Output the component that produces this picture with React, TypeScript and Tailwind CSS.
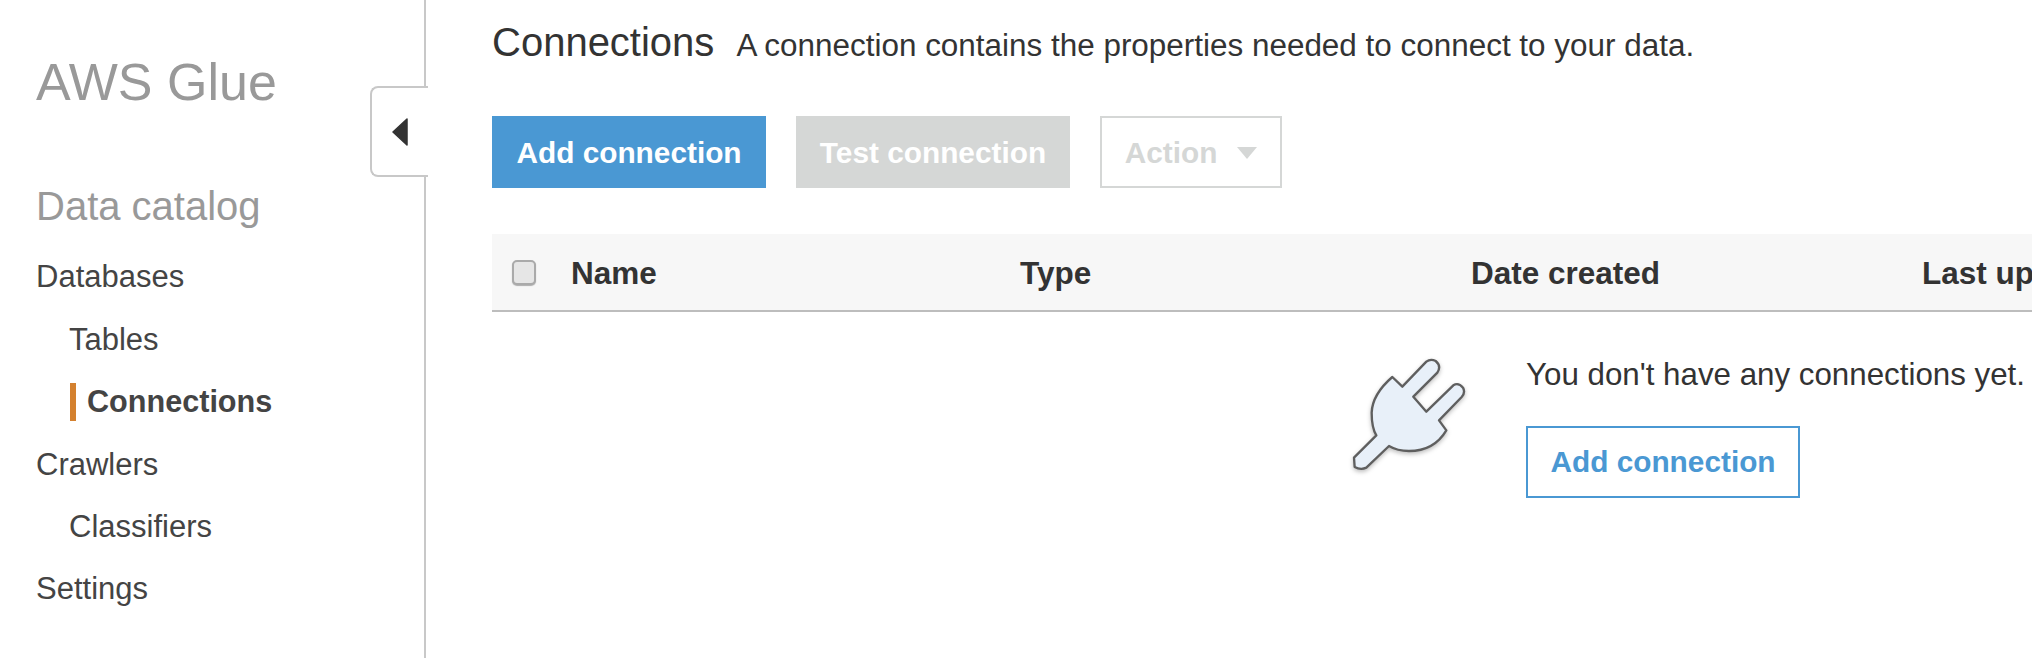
const sans = "font-['Liberation_Sans',Arial,sans-serif]";

function NavItem({ label, sub, active }: { label: string; sub?: boolean; active?: boolean }) {
  return (
    <div className={`h-[62.4px] flex items-center text-[31px] pt-[1px] text-[#444] ${sub ? "pl-[33px]" : ""}`}>
      {active ? (
        <span className="h-[38px] ml-[1px] border-l-[6px] border-[#d4812f] pl-[11px] font-bold text-[30.6px] leading-[36px]">{label}</span>
      ) : (
        label
      )}
    </div>
  );
}

function Plug() {
  return (
    <svg viewBox="0 0 600 450" className="w-[200px] h-[150px] drop-shadow-[0_2px_2px_rgba(0,0,0,0.25)]">
      <path
        d="M220 108 L250 137 L322 62 Q335 52 350 60 Q368 75 355 95 L283 167 L322 212 L403 133 Q418 123 432 140 Q440 155 428 168 L360 238 L382 268 Q345 330 270 330 Q235 330 210 315 L142 380 Q125 388 107 378 L105 350 L172 283 Q158 260 158 215 Q160 160 220 108 Z"
        fill="#e8f0f9"
        stroke="#5f5f5f"
        strokeWidth="7"
        strokeLinejoin="round"
      />
    </svg>
  );
}

export default function App() {
  return (
    <div className={`${sans} flex w-[2032px] h-[658px] overflow-hidden bg-white`}>
      <aside className="relative w-[426px] shrink-0 border-r-2 border-[#c8c8c8] pl-[36px]">
        <h1 className="pt-[52px] h-[160px] text-[52px] leading-[60px] text-[#999]">AWS Glue</h1>
        <h2 className="pt-[24px] h-[86px] text-[40px] leading-[44px] text-[#999]">Data catalog</h2>
        <NavItem label="Databases" />
        <NavItem label="Tables" sub />
        <NavItem label="Connections" sub active />
        <NavItem label="Crawlers" />
        <NavItem label="Classifiers" sub />
        <NavItem label="Settings" />
        <div className="absolute left-[370px] top-[86px] w-[58px] h-[91px] bg-white border-2 border-r-0 border-[#c8c8c8] rounded-l-[8px] flex items-center justify-center">
          <svg viewBox="0 0 16 28" className="w-[16px] h-[28px] ml-[0px]">
            <path d="M15 1 V27 L1 14 Z" fill="#333" stroke="#333" strokeWidth="1.5" strokeLinejoin="round" />
          </svg>
        </div>
      </aside>
      <main className="flex-1 min-w-0 pl-[66px]">
        <div className="h-[116px] pt-[20px] flex items-baseline text-[#333]">
          <span className="text-[40px] leading-[44px]">Connections</span>
          <span className="ml-[22px] text-[31.45px]">A connection contains the properties needed to connect to your data.</span>
        </div>
        <div className="flex gap-[30px] h-[72px] text-[29.8px] font-bold">
          <button className="w-[274px] pt-[2px] bg-[#4a98d3] text-white">Add connection</button>
          <button className="w-[274px] pt-[2px] bg-[#d5d7d6] text-white">Test connection</button>
          <button className="w-[182px] pt-[2px] border-2 border-[#d5d7d6] text-[#d5d7d6] flex items-center justify-center gap-[21px]">
            Action
            <svg viewBox="0 0 20 12" className="w-[20px] h-[12px] -ml-[1px]"><path d="M0 0 H20 L10 12 Z" fill="#d5d7d6" /></svg>
          </button>
        </div>
        <div className="mt-[46px] h-[78px] w-[1800px] bg-[#f7f7f7] border-b-2 border-[#bdbdbd] flex items-center text-[31.5px] font-bold text-[#333]">
          <span className="ml-[20px] shrink-0 w-[24px] h-[25px] rounded-[5px] border-2 border-[#aaa] bg-[#e6e6e6] shadow-[0_1px_1px_rgba(0,0,0,0.3)]" />
          <div className="ml-[35px] pt-[3px] grid grid-cols-[449px_451px_451px_400px]">
            <span>Name</span>
            <span>Type</span>
            <span>Date created</span>
            <span className="whitespace-nowrap">Last updated</span>
          </div>
        </div>
        <div className="flex pl-[824px] pt-[43px] w-[1800px]">
          <div className="w-[210px] flex">
            <div className="ml-[3px] mt-[-14px]"><Plug /></div>
          </div>
          <div className="text-[31.3px] text-[#333]">
            <p className="leading-[40px] whitespace-nowrap">You don't have any connections yet.</p>
            <button className="mt-[31px] w-[274px] h-[72px] pt-[1px] border-2 border-[#4a98d3] text-[#4a98d3] text-[29.8px] font-bold">Add connection</button>
          </div>
        </div>
      </main>
    </div>
  );
}
